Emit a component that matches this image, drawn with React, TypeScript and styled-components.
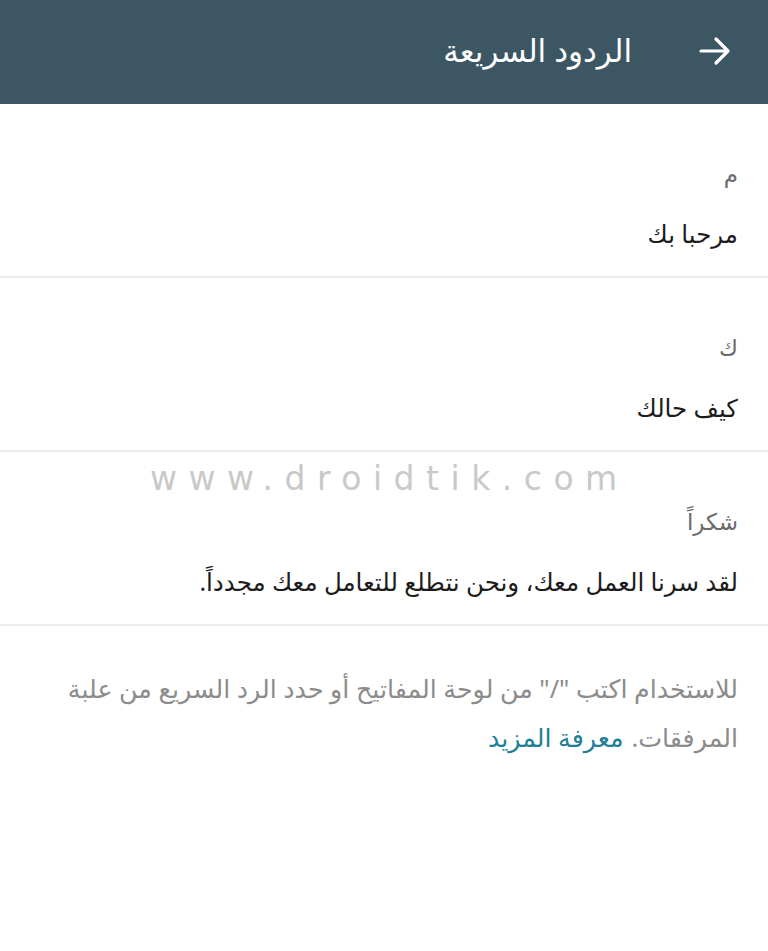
import React, { FC } from "react";
import styled, { createGlobalStyle } from "styled-components";

const GlobalStyle = createGlobalStyle`
    html, body {
        margin: 0;
        padding: 0;
        background: #ffffff;
    }
    body {
        font-family: "Noto Sans", "DejaVu Sans", sans-serif;
    }
`;

type Reply = { shortcut: string; message: string };

const replies: Reply[] = [
    { shortcut: "م", message: "مرحبا بك" },
    { shortcut: "ك", message: "كيف حالك" },
    { shortcut: "شكراً", message: "لقد سرنا العمل معك، ونحن نتطلع للتعامل معك مجدداً." },
];

const ArrowIcon: FC = () => (
    <svg width="34" height="30" viewBox="0 0 34 30" fill="none">
        <path
            d="M3 15 H30 M18 3 L30 15 L18 27"
            stroke="#ffffff"
            strokeWidth="3.2"
            strokeLinecap="round"
            strokeLinejoin="round"
        />
    </svg>
);

export default function App() {
    return (
        <Page dir="rtl">
            <GlobalStyle />
            <Toolbar>
                <BackButton aria-label="رجوع">
                    <ArrowIcon />
                </BackButton>
                <Title>الردود السريعة</Title>
            </Toolbar>

            <List>
                {replies.map((r) => (
                    <ReplyRow key={r.shortcut}>
                        <Shortcut>{r.shortcut}</Shortcut>
                        <Message>{r.message}</Message>
                    </ReplyRow>
                ))}
                <Watermark dir="ltr">www.droidtik.com</Watermark>
            </List>

            <Hint>
                <span>للاستخدام اكتب "/" من لوحة المفاتيح أو حدد الرد السريع من علبة المرفقات.</span>
                <LearnMore>معرفة المزيد</LearnMore>
            </Hint>
        </Page>
    );
}

const Page = styled.div`
    width: 768px;
    min-height: 951px;
    background: #ffffff;
    display: flex;
    flex-direction: column;
`;

const Toolbar = styled.header`
    height: 104px;
    background: #3d5664;
    display: flex;
    align-items: center;
    padding: 0 36px;
    box-sizing: border-box;
    gap: 66px;
`;

const BackButton = styled.button`
    all: unset;
    display: flex;
    align-items: center;
    margin-top: -2px;
`;

const Title = styled.h1`
    margin: 0;
    color: #ffffff;
    font-size: 31px;
    font-weight: 400;
    margin-top: -4px;
`;

const List = styled.div`
    position: relative;
    display: flex;
    flex-direction: column;
`;

const ReplyRow = styled.div`
    height: 174px;
    box-sizing: border-box;
    padding: 50px 30px 0;
    border-bottom: 2px solid #ececec;
    display: flex;
    flex-direction: column;
    gap: 22px;
`;

const Shortcut = styled.div`
    color: #6b6b6b;
    font-size: 23px;
    line-height: 38px;
`;

const Message = styled.div`
    color: #1c1c1c;
    font-size: 24.5px;
    line-height: 40px;
`;

const Watermark = styled.div`
    position: absolute;
    left: 150px;
    top: 355px;
    color: #c9c9c9;
    font-family: "DejaVu Sans", sans-serif;
    font-size: 33px;
    letter-spacing: 11.5px;
    pointer-events: none;
`;

const Hint = styled.p`
    margin: 0;
    padding: 38px 30px 0 40px;
    color: #8c8c8c;
    font-size: 25.3px;
    line-height: 49px;
`;

const LearnMore = styled.span`
    color: #1f7f96;
    margin-right: 8px;
`;
